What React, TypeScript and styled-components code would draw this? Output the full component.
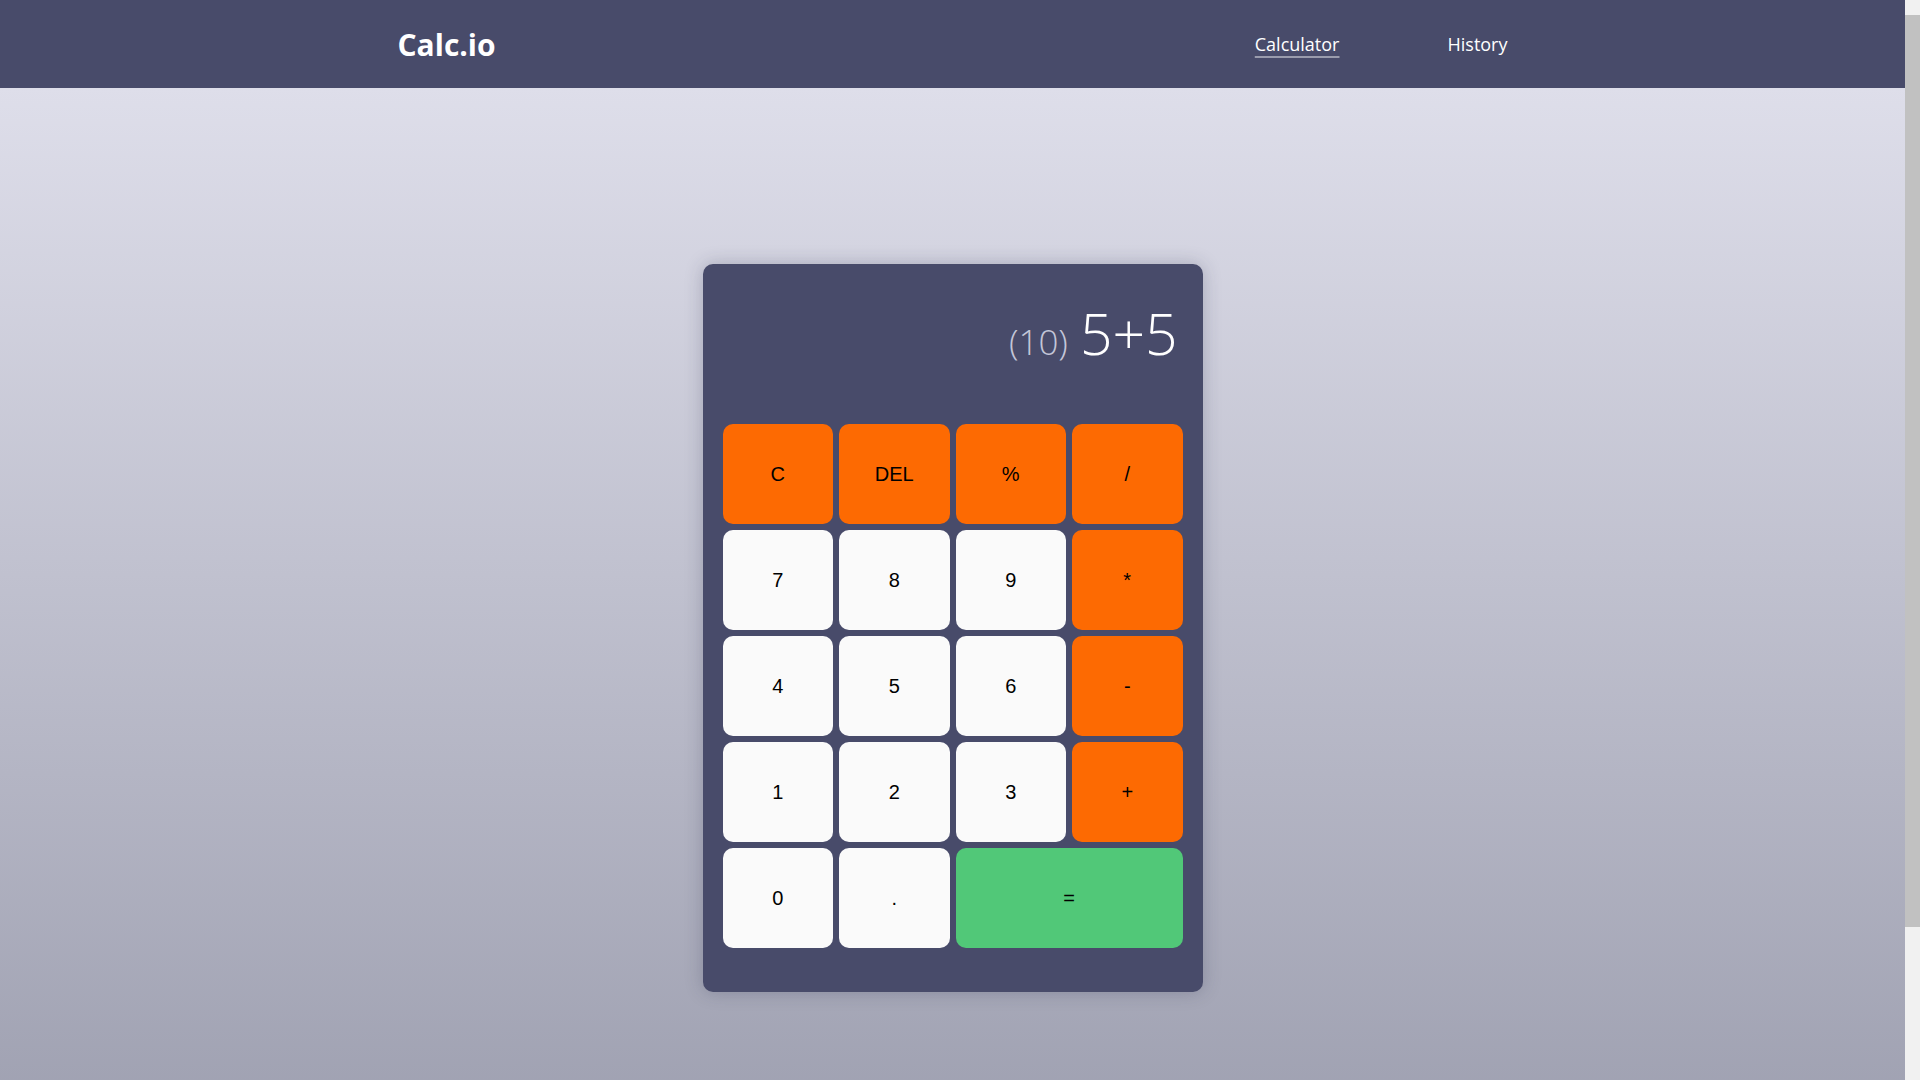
import React from "react";
import styled, { createGlobalStyle } from "styled-components";

const GlobalStyle = createGlobalStyle`
  * { box-sizing: border-box; }
  html {
    margin: 0;
    padding: 0;
    background: linear-gradient(to bottom, #f1f1f1 0, #f1f1f1 15px, #c1c1c1 15px, #c1c1c1 927px, #f1f1f1 927px);
  }
  body {
    margin: 0 15px 0 0;
    padding: 0;
    font-family: "Open Sans", "Liberation Sans", sans-serif;
    background: #989aab;
  }
`;

const Header = styled.header`
  height: 88px;
  background: #484b6a;
  display: flex;
  align-items: center;
`;

const Container = styled.div`
  width: 100%;
  max-width: 1140px;
  margin: 0 auto;
  padding: 0 15px;
  display: flex;
  align-items: center;
  justify-content: space-between;
`;

const Logo = styled.a`
  font-family: "Open Sans", sans-serif;
  font-weight: 700;
  font-size: 30px;
  color: #ffffff;
  text-decoration: none;
`;

const Nav = styled.nav`
  display: flex;
  align-items: center;
  gap: 108px;
`;

const NavLink = styled.a<{ $active?: boolean }>`
  font-family: "Open Sans", sans-serif;
  font-size: 18px;
  color: #ffffff;
  text-decoration: ${(p) => (p.$active ? "underline" : "none")};
  text-decoration-color: rgba(255, 255, 255, 0.45);
  text-decoration-thickness: 2px;
  text-underline-offset: 5px;
`;

const Page = styled.div`
  background: linear-gradient(to bottom, #dedeea 0%, #9799aa 100%);
  padding-bottom: 75px;
`;

const Main = styled.main`
  min-height: 100vh;
  display: flex;
  align-items: center;
  justify-content: center;
`;

const Card = styled.div`
  width: 500px;
  background: #484b6a;
  border-radius: 10px;
  padding: 0 20px 44px 20px;
  box-shadow: 0 0 18px rgba(40, 42, 70, 0.25);
`;

const Display = styled.div`
  height: 140px;
  margin-bottom: 20px;
  padding-right: 5px;
  display: flex;
  align-items: center;
  justify-content: flex-end;
  font-family: "Open Sans", sans-serif;
  font-weight: 300;
`;

const Readout = styled.div`
  line-height: 1.36;
  white-space: nowrap;
`;

const Result = styled.span`
  font-size: 35px;
  color: #c3c6d8;
  margin-right: 12px;
`;

const Expression = styled.span`
  font-size: 57px;
  color: #ffffff;
`;

const Keypad = styled.div`
  display: grid;
  grid-template-columns: repeat(4, 1fr);
  grid-auto-rows: 100px;
  gap: 6px;
`;

type Variant = "op" | "num" | "eq";

const Key = styled.button<{ $variant: Variant; $span?: number }>`
  border: none;
  border-radius: 10px;
  font-family: "Liberation Sans", Arial, sans-serif;
  font-size: 20px;
  color: #000000;
  cursor: pointer;
  grid-column: span ${(p) => p.$span ?? 1};
  background: ${(p) =>
    p.$variant === "op" ? "#fd6a02" : p.$variant === "eq" ? "#51c878" : "#fafafa"};
`;

const keys: { label: string; variant: Variant; span?: number }[] = [
  { label: "C", variant: "op" },
  { label: "DEL", variant: "op" },
  { label: "%", variant: "op" },
  { label: "/", variant: "op" },
  { label: "7", variant: "num" },
  { label: "8", variant: "num" },
  { label: "9", variant: "num" },
  { label: "*", variant: "op" },
  { label: "4", variant: "num" },
  { label: "5", variant: "num" },
  { label: "6", variant: "num" },
  { label: "-", variant: "op" },
  { label: "1", variant: "num" },
  { label: "2", variant: "num" },
  { label: "3", variant: "num" },
  { label: "+", variant: "op" },
  { label: "0", variant: "num" },
  { label: ".", variant: "num" },
  { label: "=", variant: "eq", span: 2 },
];

export default function App() {
  return (
    <>
      <GlobalStyle />
      <Header>
        <Container>
          <Logo href="#">Calc.io</Logo>
          <Nav>
            <NavLink href="#" $active>
              Calculator
            </NavLink>
            <NavLink href="#">History</NavLink>
          </Nav>
        </Container>
      </Header>
      <Page>
        <Main>
          <Card>
            <Display>
              <Readout>
                <Result>(10)</Result>
                <Expression>5+5</Expression>
              </Readout>
            </Display>
            <Keypad>
              {keys.map((k) => (
                <Key key={k.label} $variant={k.variant} $span={k.span}>
                  {k.label}
                </Key>
              ))}
            </Keypad>
          </Card>
        </Main>
      </Page>
    </>
  );
}
